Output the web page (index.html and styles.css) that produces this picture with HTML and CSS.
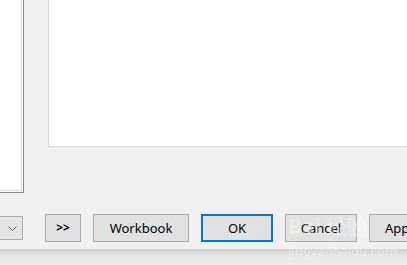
FILE: index.html
```html
<!DOCTYPE html>
<html lang="en">
<head>
    <meta charset="UTF-8">
    <title>Dialog</title>
    <link rel="stylesheet" href="styles.css">
</head>
<body>
    <div class="dialog">
        <div class="panes">
            <div class="list-pane">
                <div class="list-inner"></div>
            </div>
            <div class="preview-pane"></div>
        </div>
        <div class="button-row">
            <div class="combo">
                <svg class="chevron" width="9" height="5" viewBox="0 0 9 5">
                    <path d="M0.5 0.5 L4.5 4.5 L8.5 0.5" fill="none" stroke="#555" stroke-width="1"/>
                </svg>
            </div>
            <button class="btn btn-more">&gt;&gt;</button>
            <button class="btn btn-workbook">Workbook</button>
            <button class="btn btn-ok">OK</button>
            <button class="btn btn-cancel">Cancel</button>
            <button class="btn btn-apply">Apply</button>
        </div>
    </div>
    <div class="shadow"></div>
    <div class="watermark">
        <span class="wm-logo">Bai 经验</span>
        <span class="wm-url">jingyanbaidu.com</span>
    </div>
</body>
</html>
```

FILE: styles.css
```css
* {
    margin: 0;
    padding: 0;
    box-sizing: border-box;
}

body {
    position: relative;
    width: 407px;
    height: 265px;
    overflow: hidden;
    background: #efefef;
    font-family: "Noto Sans", "Liberation Sans", sans-serif;
}

.dialog {
    height: 249px;
    background: #f0f0f0;
    overflow: hidden;
}

.panes {
    display: flex;
    height: 193px;
}

.list-pane {
    width: 24px;
    height: 193px;
    background: #ffffff;
    border-right: 1px solid #82868f;
    border-bottom: 1px solid #82868f;
    padding: 0 1px 1px 0;
}

.list-inner {
    height: 100%;
    border-right: 1px solid #dcdcdc;
    border-bottom: 1px solid #dcdcdc;
}

.preview-pane {
    margin-left: 24px;
    flex: 1;
    height: 147px;
    background: #ffffff;
    border-left: 1px solid #d6d6d6;
    border-bottom: 1px solid #d6d6d6;
}

.button-row {
    display: flex;
    align-items: center;
    margin-top: 21px;
    height: 28px;
    white-space: nowrap;
}

.combo {
    width: 24px;
    height: 24px;
    margin-left: -1px;
    margin-right: 22px;
    flex-shrink: 0;
    background: #e5e5e5;
    border: 1px solid #adadad;
    display: flex;
    align-items: center;
    justify-content: flex-end;
    padding-right: 5px;
}

.btn {
    flex-shrink: 0;
    height: 28px;
    margin-right: 12px;
    background: #e1e1e1;
    border: 1px solid #adadad;
    font-family: "Noto Sans", "Liberation Sans", sans-serif;
    font-size: 13px;
    color: #000000;
    line-height: 24px;
}

.btn-more {
    width: 36px;
    font-weight: 700;
    font-size: 12px;
}

.btn-workbook {
    width: 96px;
}

.btn-ok {
    width: 72px;
    border: 2px solid #0078d7;
}

.btn-cancel {
    width: 72px;
}

.btn-apply {
    width: 72px;
    text-align: left;
    padding-left: 15px;
}

/* faint site watermark over the lower right corner */
.watermark {
    position: absolute;
    left: 288px;
    top: 214px;
    display: flex;
    flex-direction: column;
    gap: 6px;
    pointer-events: none;
}

.wm-logo {
    font-size: 21px;
    font-weight: 700;
    line-height: 24px;
    color: rgba(255, 255, 255, 0.35);
}

.wm-url {
    font-size: 13px;
    line-height: 14px;
    color: rgba(255, 255, 255, 0.45);
}

.shadow {
    height: 16px;
    background: linear-gradient(#cdcdcd, #e6e6e6 45%, #eeeeee);
}
```
